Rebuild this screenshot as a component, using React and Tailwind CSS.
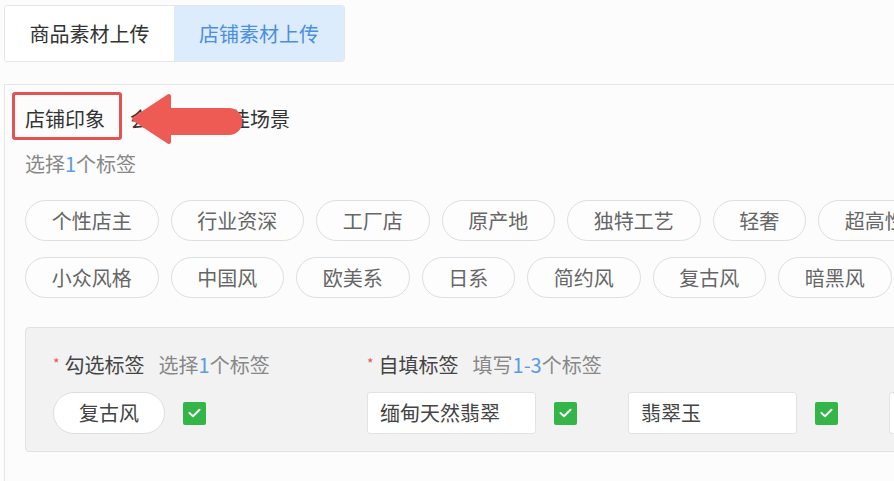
import { useState } from 'react';

const rowOne = ['个性店主', '行业资深', '工厂店', '原产地', '独特工艺', '轻奢', '超高性价比'];
const rowTwo = ['小众风格', '中国风', '欧美系', '日系', '简约风', '复古风', '暗黑风'];

const Pill = ({ children, className = '' }) => (
  <div
    className={`h-[41px] px-[25.75px] flex items-center rounded-full border border-[#dedede] bg-[#fdfdfd] text-[20px] text-[#666] whitespace-nowrap shrink-0 ${className}`}
  >
    {children}
  </div>
);

const Check = () => (
  <div className="w-[23px] h-[23px] bg-[#33b548] rounded-[2px] flex items-center justify-center shrink-0">
    <svg width="13" height="10" viewBox="0 0 13 10" fill="none">
      <path d="M1.5 5 L5 8.2 L11.5 1.8" stroke="#fff" strokeWidth="2" strokeLinecap="round" strokeLinejoin="round" />
    </svg>
  </div>
);

const Field = ({ value }) => (
  <div className="w-[169px] h-[42px] shrink-0 bg-white border border-[#e3e3e3] rounded-[3px] pl-[12px] flex items-center text-[20px] text-[#444] whitespace-nowrap">
    {value}
  </div>
);

const App = () => {
  const [tab, setTab] = useState(1);

  return (
    <div
      className="w-[894px] h-[481px] overflow-hidden bg-[#fcfcfc] leading-[28px]"
      style={{ fontFamily: '"Noto Sans CJK SC", "Noto Sans", sans-serif' }}
    >
      {/* top tabs */}
      <div className="pt-[5px] pl-[4px]">
        <div className="flex w-fit border border-[#e6e6e6] rounded-[3px] overflow-hidden">
          <button
            className={`w-[169px] h-[55px] text-[20px] text-center ${tab === 0 ? 'bg-[#dcecfc] text-[#4a8fe0]' : 'bg-white text-[#333]'}`}
            onClick={() => setTab(0)}
          >
            商品素材上传
          </button>
          <button
            className={`w-[170px] h-[55px] text-[20px] text-center ${tab === 1 ? 'bg-[#dcecfc] text-[#4a8fe0]' : 'bg-white text-[#333]'}`}
            onClick={() => setTab(1)}
          >
            店铺素材上传
          </button>
        </div>
      </div>

      {/* panel */}
      <div className="mt-[22px] ml-[4px] border-l border-t border-[#e6e6e6] h-[400px] pl-[20px] pt-[20px]">
        <div className="relative flex items-center text-[20px] text-[#333]">
          <span>店铺印象</span>
          <span className="ml-[25px]">会员推荐最佳场景</span>
          {/* annotation box */}
          <div className="absolute left-[-13px] top-[-13px] w-[110px] h-[48px] border-[3px] border-[#e5524f] rounded-[3px]"></div>
          {/* annotation arrow */}
          <svg className="absolute left-[100px] top-[-15px]" width="125" height="60" viewBox="0 0 125 60">
            <path
              d="M9 29 L44 6 L44 20 L104 20 A11.5 11.5 0 0 1 104 43 L44 43 L44 52 Z"
              fill="#ee5a54"
              stroke="#ee5a54"
              strokeWidth="4"
              strokeLinejoin="round"
            />
          </svg>
        </div>

        <div className="mt-[17px] text-[20px] text-[#888]">
          选择<span className="text-[#5b9be6]">1</span>个标签
        </div>

        <div className="mt-[22px] flex gap-[12px]">
          {rowOne.map((t) => (
            <Pill key={t}>{t}</Pill>
          ))}
        </div>
        <div className="mt-[16px] flex gap-[12px]">
          {rowTwo.map((t) => (
            <Pill key={t}>{t}</Pill>
          ))}
        </div>

        {/* selected tags box */}
        <div className="mt-[29px] w-[900px] bg-[#f2f2f2] border border-[#e2e2e2] rounded-[4px] pl-[27px] pt-[23px] pb-[17px]">
          <div className="flex text-[20px]">
            <div className="w-[314px] shrink-0 flex items-center">
              <span className="text-[#f0524f] text-[14px] mr-[5px] -mt-[4px]">*</span>
              <span className="text-[#444]">勾选标签</span>
              <span className="ml-[14px] text-[#888]">
                选择<span className="text-[#5b9be6]">1</span>个标签
              </span>
            </div>
            <div className="flex items-center shrink-0">
              <span className="text-[#f0524f] text-[14px] mr-[5px] -mt-[4px]">*</span>
              <span className="text-[#444]">自填标签</span>
              <span className="ml-[14px] text-[#888]">
                填写<span className="text-[#5b9be6]">1-3</span>个标签
              </span>
            </div>
          </div>

          <div className="mt-[13px] flex items-center">
            <div className="w-[314px] shrink-0 flex items-center">
              <div className="h-[42px] w-[112px] rounded-full border border-[#dedede] bg-white flex items-center justify-center text-[20px] text-[#444]">
                复古风
              </div>
              <div className="ml-[18px]">
                <Check />
              </div>
            </div>
            <div className="flex items-center shrink-0">
              <Field value="缅甸天然翡翠" />
              <div className="ml-[18px]">
                <Check />
              </div>
              <div className="ml-[51px]">
                <Field value="翡翠玉" />
              </div>
              <div className="ml-[18px]">
                <Check />
              </div>
              <div className="ml-[51px]">
                <Field value="" />
              </div>
            </div>
          </div>
        </div>
      </div>
    </div>
  );
};

export default App;
